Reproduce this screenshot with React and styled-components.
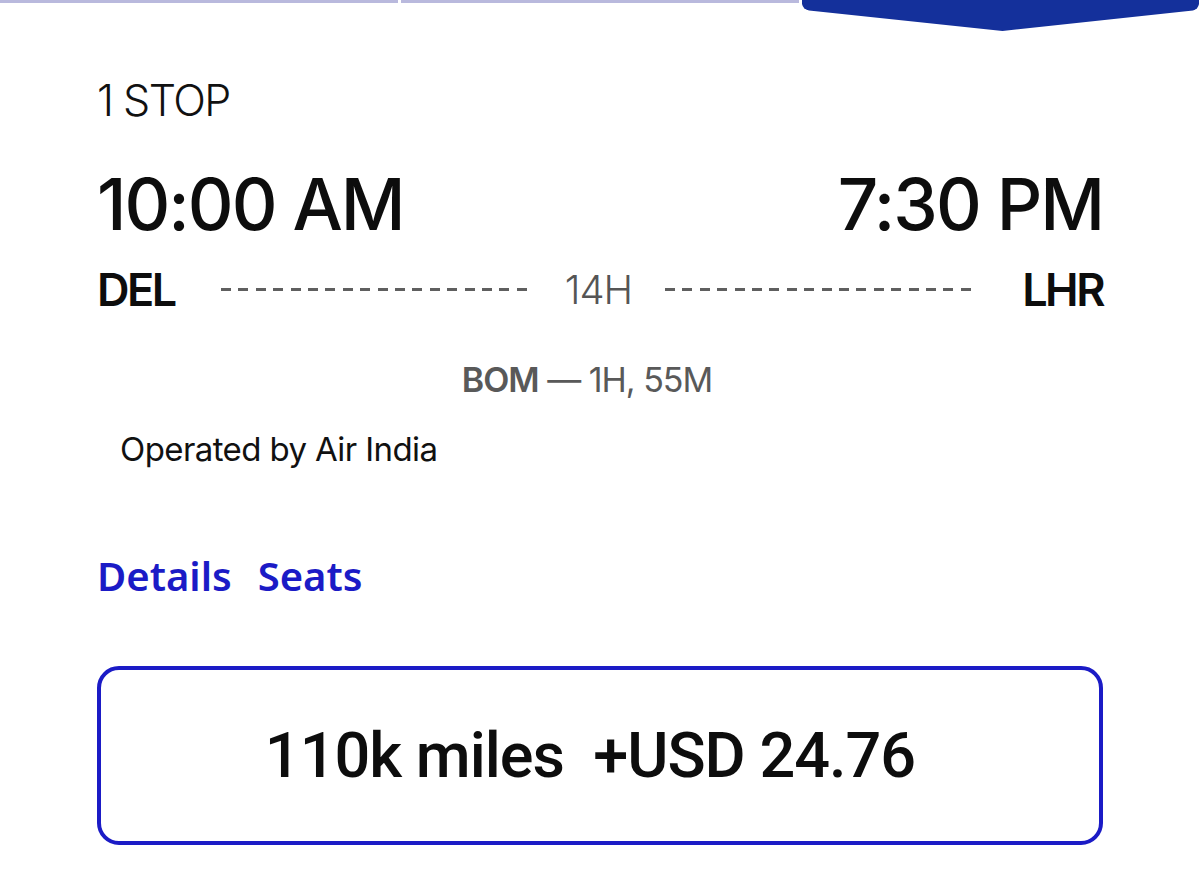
import React from 'react'
import styled, { createGlobalStyle } from 'styled-components'

const GlobalStyle = createGlobalStyle`
  body {
    margin: 0;
    background: #ffffff;
    font-family: Inter, 'Noto Sans', sans-serif;
    color: #111111;
  }
`

const Page = styled.div`
  width: 1200px;
  height: 873px;
  overflow: hidden;
  background: #ffffff;
`

const TopNav = styled.div`
  display: flex;
  gap: 3px;
  height: 31px;
`

const NavBar = styled.div`
  flex: 1;
  height: 3px;
  background: #b9b9dd;
`

const NavActive = styled.div`
  flex: 1;
  height: 31px;

  svg {
    display: block;
    width: 100%;
    height: 100%;
  }
`

const Content = styled.div`
  padding: 0 97px;
`

const StopLabel = styled.div`
  margin-top: 48px;
  font-size: 43px;
  font-weight: 300;
  line-height: 1;
  letter-spacing: -1.5px;
  color: #111111;
`

const TimesRow = styled.div`
  display: flex;
  justify-content: space-between;
  margin-top: 47px;
`

const Time = styled.div`
  font-size: 71px;
  font-weight: 500;
  line-height: 1;
  letter-spacing: -2px;
  color: #0d0d0d;
`

const RouteRow = styled.div`
  display: flex;
  align-items: center;
  margin-top: 27px;
`

const Airport = styled.div`
  font-size: 45px;
  font-weight: 600;
  line-height: 1;
  letter-spacing: -2.5px;
  color: #0d0d0d;
`

const Dashes = styled.div`
  flex: 1;
  height: 3px;
  margin: 0 ${(props) => props.right}px 0 ${(props) => props.left}px;
  background-image: repeating-linear-gradient(
    to right,
    #5f5f5f 0 10px,
    transparent 10px 17.4px
  );
`

const Duration = styled.div`
  font-size: 40px;
  font-weight: 300;
  line-height: 1;
  letter-spacing: -1px;
  color: #555555;
`

const Layover = styled.div`
  margin-top: 51px;
  padding-right: 26px;
  text-align: center;
  font-size: 34px;
  line-height: 1;
  letter-spacing: -1px;
  color: #595959;

  strong {
    font-weight: 600;
  }
`

const Operator = styled.div`
  margin-top: 36px;
  padding-left: 23px;
  font-size: 33px;
  font-weight: 400;
  line-height: 1;
  letter-spacing: -0.6px;
  color: #111111;
`

const Links = styled.div`
  display: flex;
  gap: 26px;
  margin-top: 90px;
`

const LinkButton = styled.a`
  font-family: 'Noto Sans', Inter, sans-serif;
  font-size: 40px;
  font-weight: 600;
  line-height: 1;
  color: #1b1bc6;
  text-decoration: none;
  cursor: pointer;
`

const FareBox = styled.button`
  display: flex;
  align-items: center;
  justify-content: center;
  box-sizing: border-box;
  width: 100%;
  height: 179px;
  margin-top: 70px;
  padding: 0 20px 0 0;
  border: 4px solid #1b1bc6;
  border-radius: 22px;
  background: #ffffff;
  cursor: pointer;
`

const FareText = styled.span`
  font-family: Roboto, 'Liberation Sans', sans-serif;
  font-size: 63px;
  font-weight: 500;
  letter-spacing: -1px;
  color: #0d0d0d;
  white-space: pre;
`

function ActiveTab() {
  return (
    <svg viewBox="0 0 397 31" preserveAspectRatio="none">
      <path
        d="M0 0 L0 4 Q1 9 7 10.5 L200 31 L390 10.5 Q395 9 396 4 L396 0 Z"
        fill="#14309b"
      />
    </svg>
  )
}

export default function App() {
  return (
    <Page>
      <GlobalStyle />
      <TopNav>
        <NavBar />
        <NavBar />
        <NavActive>
          <ActiveTab />
        </NavActive>
      </TopNav>
      <Content>
        <StopLabel>1 STOP</StopLabel>
        <TimesRow>
          <Time>10:00 AM</Time>
          <Time>7:30 PM</Time>
        </TimesRow>
        <RouteRow>
          <Airport>DEL</Airport>
          <Dashes left={46} right={33} />
          <Duration>14H</Duration>
          <Dashes left={33} right={46} />
          <Airport>LHR</Airport>
        </RouteRow>
        <Layover>
          <strong>BOM</strong> — 1H, 55M
        </Layover>
        <Operator>Operated by Air India</Operator>
        <Links>
          <LinkButton>Details</LinkButton>
          <LinkButton>Seats</LinkButton>
        </Links>
        <FareBox>
          <FareText>110k miles  +USD 24.76</FareText>
        </FareBox>
      </Content>
    </Page>
  )
}
